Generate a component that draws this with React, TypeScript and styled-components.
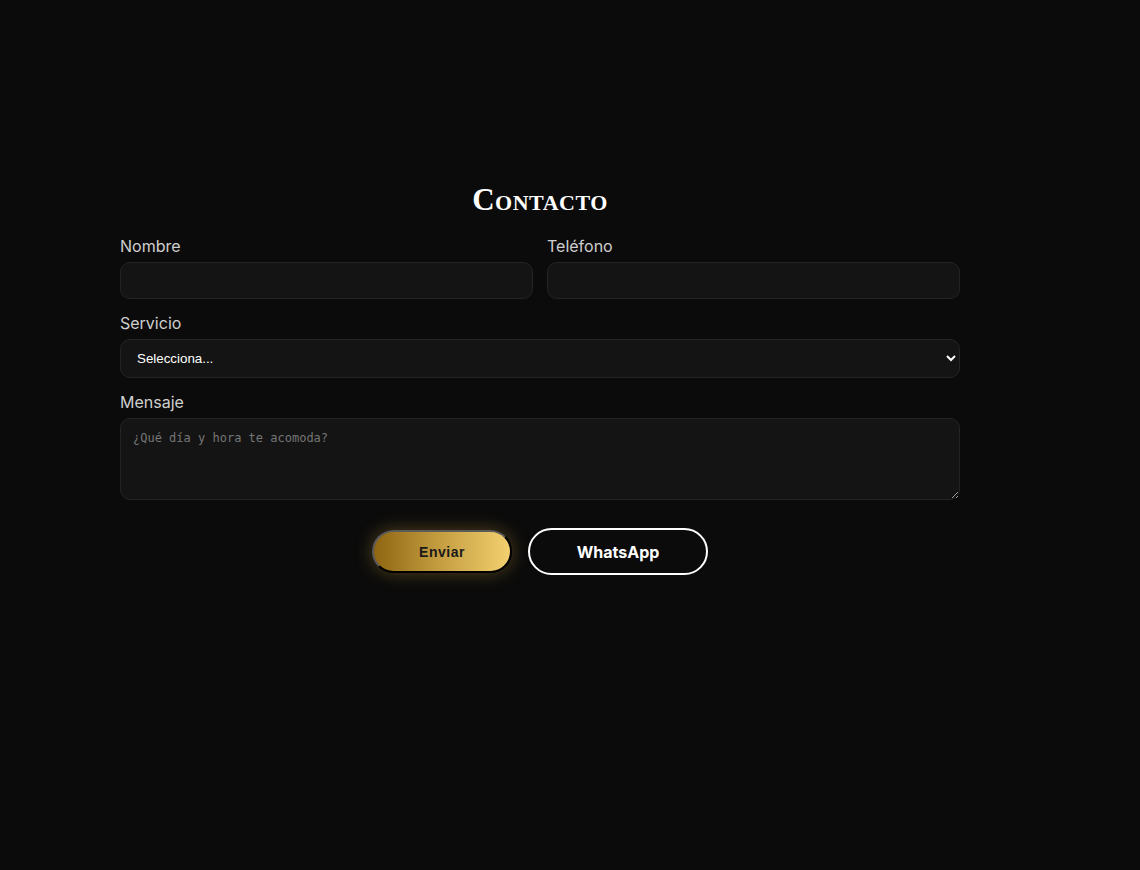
import React from "react";
import styled, { createGlobalStyle } from "styled-components";

const Global = createGlobalStyle`
  html, body { margin: 0; padding: 0; background: #0b0b0b; }
  body { font-family: Inter, "Noto Sans", sans-serif; color: #ddd; }
  * { box-sizing: border-box; }
`;

const Page = styled.div`
  min-height: 870px;
  background: #0b0b0b;
  padding: 182px 0 0 120px;
`;

const Section = styled.section`
  width: 840px;
  display: flex;
  flex-direction: column;
`;

const Title = styled.h2`
  margin: 0 0 18px;
  text-align: center;
  font-family: "Liberation Serif", serif;
  font-variant: small-caps;
  font-weight: 700;
  font-size: 31px;
  line-height: 36px;
  letter-spacing: 0.5px;
  color: #fff;
`;

const Form = styled.form`
  display: flex;
  flex-direction: column;
  gap: 14px;
`;

const Row = styled.div`
  display: grid;
  grid-template-columns: 1fr 1fr;
  gap: 14px;
`;

const Field = styled.div`
  display: flex;
  flex-direction: column;
`;

const Label = styled.label`
  font-size: 16px;
  line-height: 20px;
  color: #cfcfcf;
  margin-bottom: 6px;
`;

const fieldBase = `
  width: 100%;
  background: #141414;
  border: 1px solid #242424;
  border-radius: 10px;
  color: #fff;
  outline: none;
`;

const Input = styled.input`
  ${fieldBase}
  height: 37px;
  padding: 0 12px;
`;

const Select = styled.select`
  ${fieldBase}
  height: 39px;
  padding: 0 12px;
  font-family: "Liberation Sans", Arial, sans-serif;
  font-size: 13.33px;
  color-scheme: dark;
`;

const TextArea = styled.textarea`
  ${fieldBase}
  height: 82px;
  padding: 12px;
  font-family: "DejaVu Sans Mono", monospace;
  font-size: 12px;
  resize: vertical;
  &::placeholder { color: #767676; }
`;

const Actions = styled.div`
  display: flex;
  justify-content: center;
  align-items: center;
  gap: 16px;
  margin-top: 14px;
`;

const SendButton = styled.button`
  width: 140px;
  height: 43px;
  border-radius: 999px;
  border: 2px solid;
  border-color: #5a5a5a #000 #000 #5a5a5a;
  background: linear-gradient(90deg, #8e6511 0%, #c19a3e 45%, #f3d06f 100%);
  color: #1a1a1a;
  font-family: "Liberation Sans", Arial, sans-serif;
  font-weight: 700;
  font-size: 14px;
  letter-spacing: 0.5px;
  box-shadow: 0 0 18px rgba(212, 168, 60, 0.35);
  cursor: pointer;
`;

const WhatsButton = styled.button`
  width: 180px;
  height: 47px;
  border-radius: 999px;
  border: 2px solid #fff;
  background: #0b0b0b;
  color: #fff;
  font-family: Inter, "Liberation Sans", sans-serif;
  font-weight: 700;
  font-size: 16px;
  cursor: pointer;
`;

export default function App() {
  return (
    <>
      <Global />
      <Page>
        <Section>
          <Title>Contacto</Title>
          <Form onSubmit={(e) => e.preventDefault()}>
            <Row>
              <Field>
                <Label>Nombre</Label>
                <Input type="text" />
              </Field>
              <Field>
                <Label>Teléfono</Label>
                <Input type="tel" />
              </Field>
            </Row>
            <Field>
              <Label>Servicio</Label>
              <Select defaultValue="">
                <option value="">Selecciona...</option>
              </Select>
            </Field>
            <Field>
              <Label>Mensaje</Label>
              <TextArea placeholder="¿Qué día y hora te acomoda?" />
            </Field>
            <Actions>
              <SendButton type="submit">Enviar</SendButton>
              <WhatsButton type="button">WhatsApp</WhatsButton>
            </Actions>
          </Form>
        </Section>
      </Page>
    </>
  );
}
